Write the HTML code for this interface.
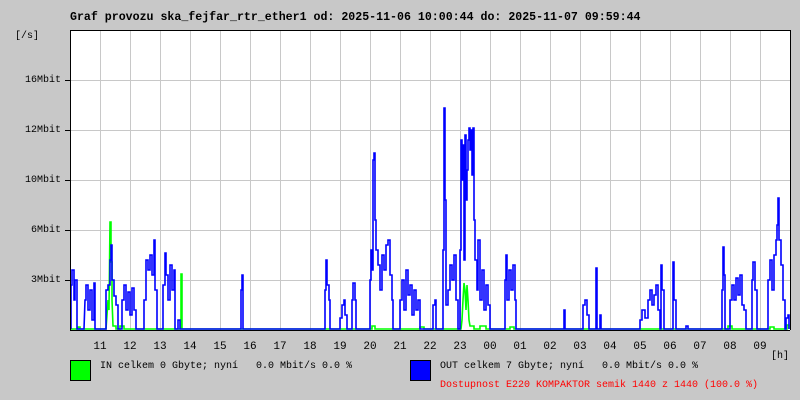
<!DOCTYPE html>
<html><head><meta charset="utf-8"><style>
html,body{margin:0;padding:0;background:#c8c8c8;}
body{width:800px;height:400px;position:relative;overflow:hidden;font-family:"Liberation Mono","DejaVu Sans Mono",monospace;font-size:10px;color:#000;}
.t{position:absolute;white-space:pre;line-height:12px;}
.yl{position:absolute;right:739px;white-space:pre;line-height:12px;}
.hl{position:absolute;top:341px;width:30px;text-align:center;font-size:11px;}
</style></head><body>
<div class="t" style="left:70px;top:12px;font-weight:bold;font-size:11.6px;">Graf provozu ska_fejfar_rtr_ether1 od: 2025-11-06 10:00:44 do: 2025-11-07 09:59:44</div>
<div class="t" style="left:15px;top:31px;">[/s]</div>
<div class="yl" style="top:75px;">16Mbit</div>
<div class="yl" style="top:125px;">12Mbit</div>
<div class="yl" style="top:175px;">10Mbit</div>
<div class="yl" style="top:225px;">6Mbit</div>
<div class="yl" style="top:275px;">3Mbit</div>
<svg width="800" height="400" style="position:absolute;left:0;top:0;">
<rect x="70" y="30" width="720" height="300" fill="#fff"/>
<path stroke="#c8c8c8" fill="none" d="M100.5 31V330M130.5 31V330M160.5 31V330M190.5 31V330M220.5 31V330M250.5 31V330M280.5 31V330M310.5 31V330M340.5 31V330M370.5 31V330M400.5 31V330M430.5 31V330M460.5 31V330M490.5 31V330M520.5 31V330M550.5 31V330M580.5 31V330M610.5 31V330M640.5 31V330M670.5 31V330M700.5 31V330M730.5 31V330M760.5 31V330M71 80.5H790M71 130.5H790M71 180.5H790M71 230.5H790M71 280.5H790"/>
<polyline fill="none" stroke="#00ff00" stroke-width="1.6" points="71,329 78,329 78,327 80,327 80,329 106,329 107,315 108,300 109,310 110,222 111,222 111,262 112,262 112,300 113,326 116,326 116,329 120,329 120,326 124,326 124,329 181,329 181,274 182,274 182,329 372,329 372,326 375,326 375,329 420,329 420,327 424,327 424,329 461,329 462,320 463,300 464,283 465,290 466,310 467,285 468,300 469,320 470,326 474,326 474,329 480,329 480,326 486,326 486,329 510,329 510,327 514,327 514,329 728,329 728,326 732,326 732,329 770,329 770,327 774,327 774,329 787,329 787,325 789,325 789,329"/>
<polyline fill="none" stroke="#0000ff" stroke-width="1.6" points="71,329 71,285 72,285 72,270 74,270 74,300 75,300 75,280 77,280 77,329 84,329 85,300 86,300 86,285 88,285 88,310 90,310 90,290 92,290 92,320 94,320 94,283 95,283 95,329 106,329 106,290 108,290 108,285 110,285 110,260 111,260 111,245 112,245 112,280 114,280 114,296 116,296 116,305 118,305 118,329 122,329 122,300 124,300 124,285 126,285 126,310 128,310 128,292 130,292 130,315 132,315 132,288 134,288 134,310 136,310 136,329 144,329 144,300 146,300 146,260 148,260 148,270 150,270 150,255 152,255 152,275 154,275 154,240 155,240 155,290 157,290 157,329 163,329 163,285 165,285 165,253 166,253 166,275 168,275 168,300 170,300 170,265 172,265 172,290 174,290 174,270 175,270 175,329 178,329 178,320 180,320 180,329 240,329 241,329 241,290 242,290 242,275 243,275 243,329 325,329 325,290 326,290 326,260 327,260 327,285 329,285 329,300 330,300 330,329 340,329 340,318 342,318 342,305 344,305 344,300 345,300 345,315 347,315 347,329 352,329 352,300 353,300 353,283 355,283 355,300 356,300 356,329 370,329 370,280 371,280 371,250 372,250 372,270 373,270 373,160 374,160 374,153 375,153 375,220 376,220 376,250 378,250 378,265 380,265 380,290 382,290 382,255 384,255 384,270 386,270 386,245 388,245 388,240 390,240 390,275 392,275 392,300 393,300 393,329 400,329 400,300 402,300 402,280 404,280 404,310 406,310 406,270 408,270 408,295 410,295 410,285 412,285 412,315 414,315 414,290 416,290 416,310 418,310 418,300 420,300 420,329 433,329 433,305 435,305 435,300 436,300 436,329 443,329 443,250 444,250 444,108 445,108 445,200 446,200 446,305 448,305 448,290 450,290 450,265 452,265 452,280 454,280 454,255 456,255 456,300 458,300 458,329 460,329 460,250 461,250 461,140 462,140 462,180 463,180 463,145 464,145 464,260 465,260 465,135 466,135 466,200 467,200 467,170 468,170 468,140 469,140 469,128 470,128 470,150 471,150 471,130 472,130 472,175 473,175 473,128 474,128 474,220 475,220 475,260 477,260 477,290 478,290 478,240 480,240 480,300 482,300 482,270 484,270 484,310 486,310 486,285 488,285 488,305 490,305 490,329 505,329 505,280 506,280 506,255 507,255 507,300 509,300 509,270 511,270 511,290 513,290 513,265 515,265 515,300 516,300 516,329 564,329 564,310 565,310 565,329 583,329 583,305 585,305 585,300 587,300 587,315 589,315 589,329 596,329 596,268 597,268 597,329 600,329 600,315 601,315 601,329 640,329 640,320 642,320 642,310 645,310 645,318 648,318 648,300 650,300 650,290 652,290 652,305 654,305 654,295 656,295 656,285 658,285 658,310 660,310 660,329 661,329 661,265 662,265 662,290 664,290 664,329 673,329 673,262 674,262 674,300 676,300 676,329 686,329 686,326 688,326 688,329 722,329 722,290 723,290 723,247 724,247 724,275 725,275 725,329 730,329 730,300 732,300 732,285 734,285 734,300 736,300 736,278 738,278 738,295 740,295 740,275 742,275 742,305 744,305 744,310 746,310 746,329 752,329 752,280 753,280 753,262 755,262 755,290 757,290 757,329 768,329 768,280 770,280 770,260 772,260 772,290 774,290 774,255 776,255 776,240 777,240 777,225 778,225 778,198 779,198 779,240 781,240 781,265 783,265 783,300 785,300 785,329 786,329 786,318 788,318 788,315 789,315 789,329"/>
<path d="M70.5 30V330.5M70 30.5H790.5V330M70 330.5H790" stroke="#000" stroke-width="1" fill="none"/>
<path d="M65 80.5H70M65 130.5H70M65 180.5H70M65 230.5H70M65 280.5H70" stroke="#000"/>
<rect x="70.5" y="360.5" width="20" height="20" fill="#00ff00" stroke="#000"/>
<rect x="410.5" y="360.5" width="20" height="20" fill="#0000ff" stroke="#000"/>
</svg>
<div class="t hl" style="left:85px">11</div>
<div class="t hl" style="left:115px">12</div>
<div class="t hl" style="left:145px">13</div>
<div class="t hl" style="left:175px">14</div>
<div class="t hl" style="left:205px">15</div>
<div class="t hl" style="left:235px">16</div>
<div class="t hl" style="left:265px">17</div>
<div class="t hl" style="left:295px">18</div>
<div class="t hl" style="left:325px">19</div>
<div class="t hl" style="left:355px">20</div>
<div class="t hl" style="left:385px">21</div>
<div class="t hl" style="left:415px">22</div>
<div class="t hl" style="left:445px">23</div>
<div class="t hl" style="left:475px">00</div>
<div class="t hl" style="left:505px">01</div>
<div class="t hl" style="left:535px">02</div>
<div class="t hl" style="left:565px">03</div>
<div class="t hl" style="left:595px">04</div>
<div class="t hl" style="left:625px">05</div>
<div class="t hl" style="left:655px">06</div>
<div class="t hl" style="left:685px">07</div>
<div class="t hl" style="left:715px">08</div>
<div class="t hl" style="left:745px">09</div>
<div class="t" style="left:771px;top:351px;">[h]</div>
<div class="t" style="left:100px;top:361px;">IN celkem 0 Gbyte; nyní   0.0 Mbit/s 0.0 %</div>
<div class="t" style="left:440px;top:361px;">OUT celkem 7 Gbyte; nyní   0.0 Mbit/s 0.0 %</div>
<div class="t" style="left:440px;top:380px;color:#ff0000;">Dostupnost E220 KOMPAKTOR semik 1440 z 1440 (100.0 %)</div>
</body></html>
